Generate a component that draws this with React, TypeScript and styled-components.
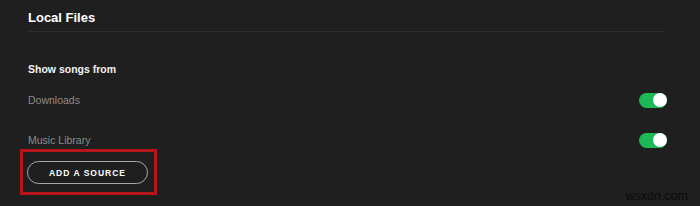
import styled, { createGlobalStyle } from 'styled-components';

const GlobalStyle = createGlobalStyle`
    html, body {
        margin: 0;
        padding: 0;
        background: #1f1f1f;
    }
    body {
        font-family: "Liberation Sans", Arial, sans-serif;
    }
`;

const Page = styled.div`
    position: relative;
    width: 700px;
    height: 206px;
    box-sizing: border-box;
    padding: 0 36px 0 28px;
    background: #1f1f1f;
    overflow: hidden;
`;

const Header = styled.div`
    padding: 9px 0 4px;
    border-bottom: 1px solid #2d2d2d;
`;

const Title = styled.h1`
    margin: 0;
    font-size: 13px;
    line-height: 18px;
    font-weight: bold;
    color: #ffffff;
`;

const SectionTitle = styled.h2`
    margin: 29px 0 15px;
    font-size: 10.5px;
    line-height: 16px;
    font-weight: bold;
    color: #f2f2f2;
`;

const Rows = styled.div`
    display: flex;
    flex-direction: column;
    gap: 24px;
`;

const Row = styled.div`
    display: flex;
    align-items: center;
    justify-content: space-between;
    height: 16px;
`;

const Label = styled.span`
    font-size: 10.5px;
    color: #8c8c8c;
`;

const Toggle = styled.div<{ $on: boolean }>`
    position: relative;
    width: 28px;
    height: 15px;
    border-radius: 8px;
    background: ${({ $on }) => ($on ? '#1db954' : '#535353')};
    margin-right: -3px;
`;

const Knob = styled.div<{ $on: boolean }>`
    position: absolute;
    top: 0.5px;
    left: ${({ $on }) => ($on ? '14px' : '1px')};
    width: 14px;
    height: 14px;
    border-radius: 50%;
    background: #ffffff;
`;

const Highlight = styled.div`
    display: inline-block;
    margin: 1px 0 0 -8px;
    padding: 9px 6px 8px 4px;
    border: 3px solid #b8141b;
`;

const SourceButton = styled.button`
    display: flex;
    align-items: center;
    justify-content: center;
    width: 121px;
    height: 23px;
    padding: 0;
    border: 1px solid #a8a8a8;
    border-radius: 12px;
    background: transparent;
    color: #ffffff;
    font-family: "Liberation Sans", Arial, sans-serif;
    font-size: 8.5px;
    font-weight: bold;
    letter-spacing: 1px;
`;

const Watermark = styled.span`
    position: absolute;
    right: 12px;
    bottom: 3px;
    font-size: 12.5px;
    color: #0c0c0c;
`;

const sources = [
    { name: 'Downloads', on: true },
    { name: 'Music Library', on: true },
];

export default function App() {
    return (
        <>
            <GlobalStyle />
            <Page>
                <Header>
                    <Title>Local Files</Title>
                </Header>
                <SectionTitle>Show songs from</SectionTitle>
                <Rows>
                    {sources.map((s) => (
                        <Row key={s.name}>
                            <Label>{s.name}</Label>
                            <Toggle $on={s.on}>
                                <Knob $on={s.on} />
                            </Toggle>
                        </Row>
                    ))}
                </Rows>
                <Highlight>
                    <SourceButton>ADD A SOURCE</SourceButton>
                </Highlight>
                <Watermark>wsxdn.com</Watermark>
            </Page>
        </>
    );
}
